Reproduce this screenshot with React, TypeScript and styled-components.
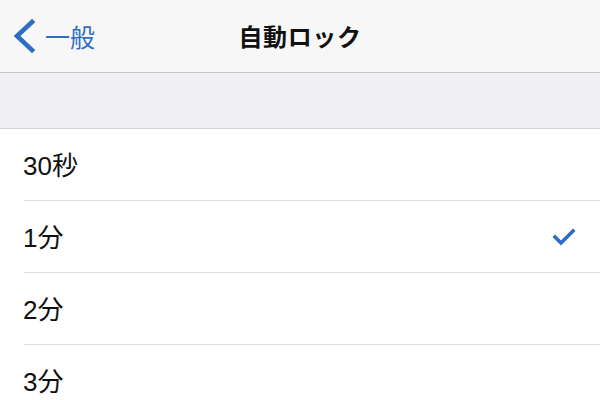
import React from "react";
import styled, { createGlobalStyle } from "styled-components";

const Global = createGlobalStyle`
  html, body { margin: 0; padding: 0; background: #ffffff; }
  body { font-family: "Liberation Sans", "Noto Sans CJK JP", sans-serif; }
`;

const Page = styled.div`
  width: 600px;
  height: 400px;
  overflow: hidden;
  display: flex;
  flex-direction: column;
  background: #ffffff;
`;

const NavBar = styled.div`
  height: 72px;
  flex: none;
  background: #f7f7f8;
  border-bottom: 1px solid #c4c4c8;
  display: grid;
  grid-template-columns: 1fr auto 1fr;
  align-items: center;
`;

const BackButton = styled.div`
  display: flex;
  align-items: center;
  gap: 9px;
  padding-left: 12px;
  color: #2d6ec3;
  font-size: 25px;
  font-family: "Noto Sans CJK JP", sans-serif;
  margin-top: -1px;
`;

const Title = styled.div`
  font-family: "Noto Sans CJK JP", sans-serif;
  font-weight: 700;
  font-size: 24px;
  color: #111111;
  letter-spacing: 0.6px;
  margin-top: -2px;
`;

const Spacer = styled.div`
  height: 55px;
  flex: none;
  background: #efeff4;
  border-bottom: 1px solid #d4d4d8;
`;

const List = styled.div`
  display: flex;
  flex-direction: column;
`;

const Row = styled.div`
  height: 71px;
  flex: none;
  display: flex;
  align-items: center;
  justify-content: space-between;
  padding: 0 24px 0 23px;
  box-sizing: border-box;
`;

const Separator = styled.div`
  height: 1px;
  margin-left: 24px;
  background: #dedede;
  flex: none;
`;

const Label = styled.span`
  font-size: 26px;
  color: #111111;
  font-family: "Liberation Sans", "Noto Sans CJK JP", sans-serif;
  margin-top: -2px;
`;

const Chevron = () => (
  <svg width="24" height="36" viewBox="0 0 24 36">
    <path d="M20 4 L5 18 L20 32" fill="none" stroke="#2d6ec3" strokeWidth="4.6" strokeLinecap="square" strokeLinejoin="miter" />
  </svg>
);

const Check = () => (
  <svg width="24" height="20" viewBox="0 0 24 20">
    <path d="M3 10 L9 16 L21 4" fill="none" stroke="#2d6ec3" strokeWidth="3.6" strokeLinecap="square" />
  </svg>
);

const items = [
  { label: "30秒", checked: false },
  { label: "1分", checked: true },
  { label: "2分", checked: false },
  { label: "3分", checked: false },
];

export default function App() {
  return (
    <Page>
      <Global />
      <NavBar>
        <BackButton>
          <Chevron />
          <span>一般</span>
        </BackButton>
        <Title>自動ロック</Title>
        <div />
      </NavBar>
      <Spacer />
      <List>
        {items.map((it, i) => (
          <React.Fragment key={it.label}>
            <Row>
              <Label>{it.label}</Label>
              {it.checked && <Check />}
            </Row>
            {i < items.length - 1 && <Separator />}
          </React.Fragment>
        ))}
      </List>
    </Page>
  );
}
